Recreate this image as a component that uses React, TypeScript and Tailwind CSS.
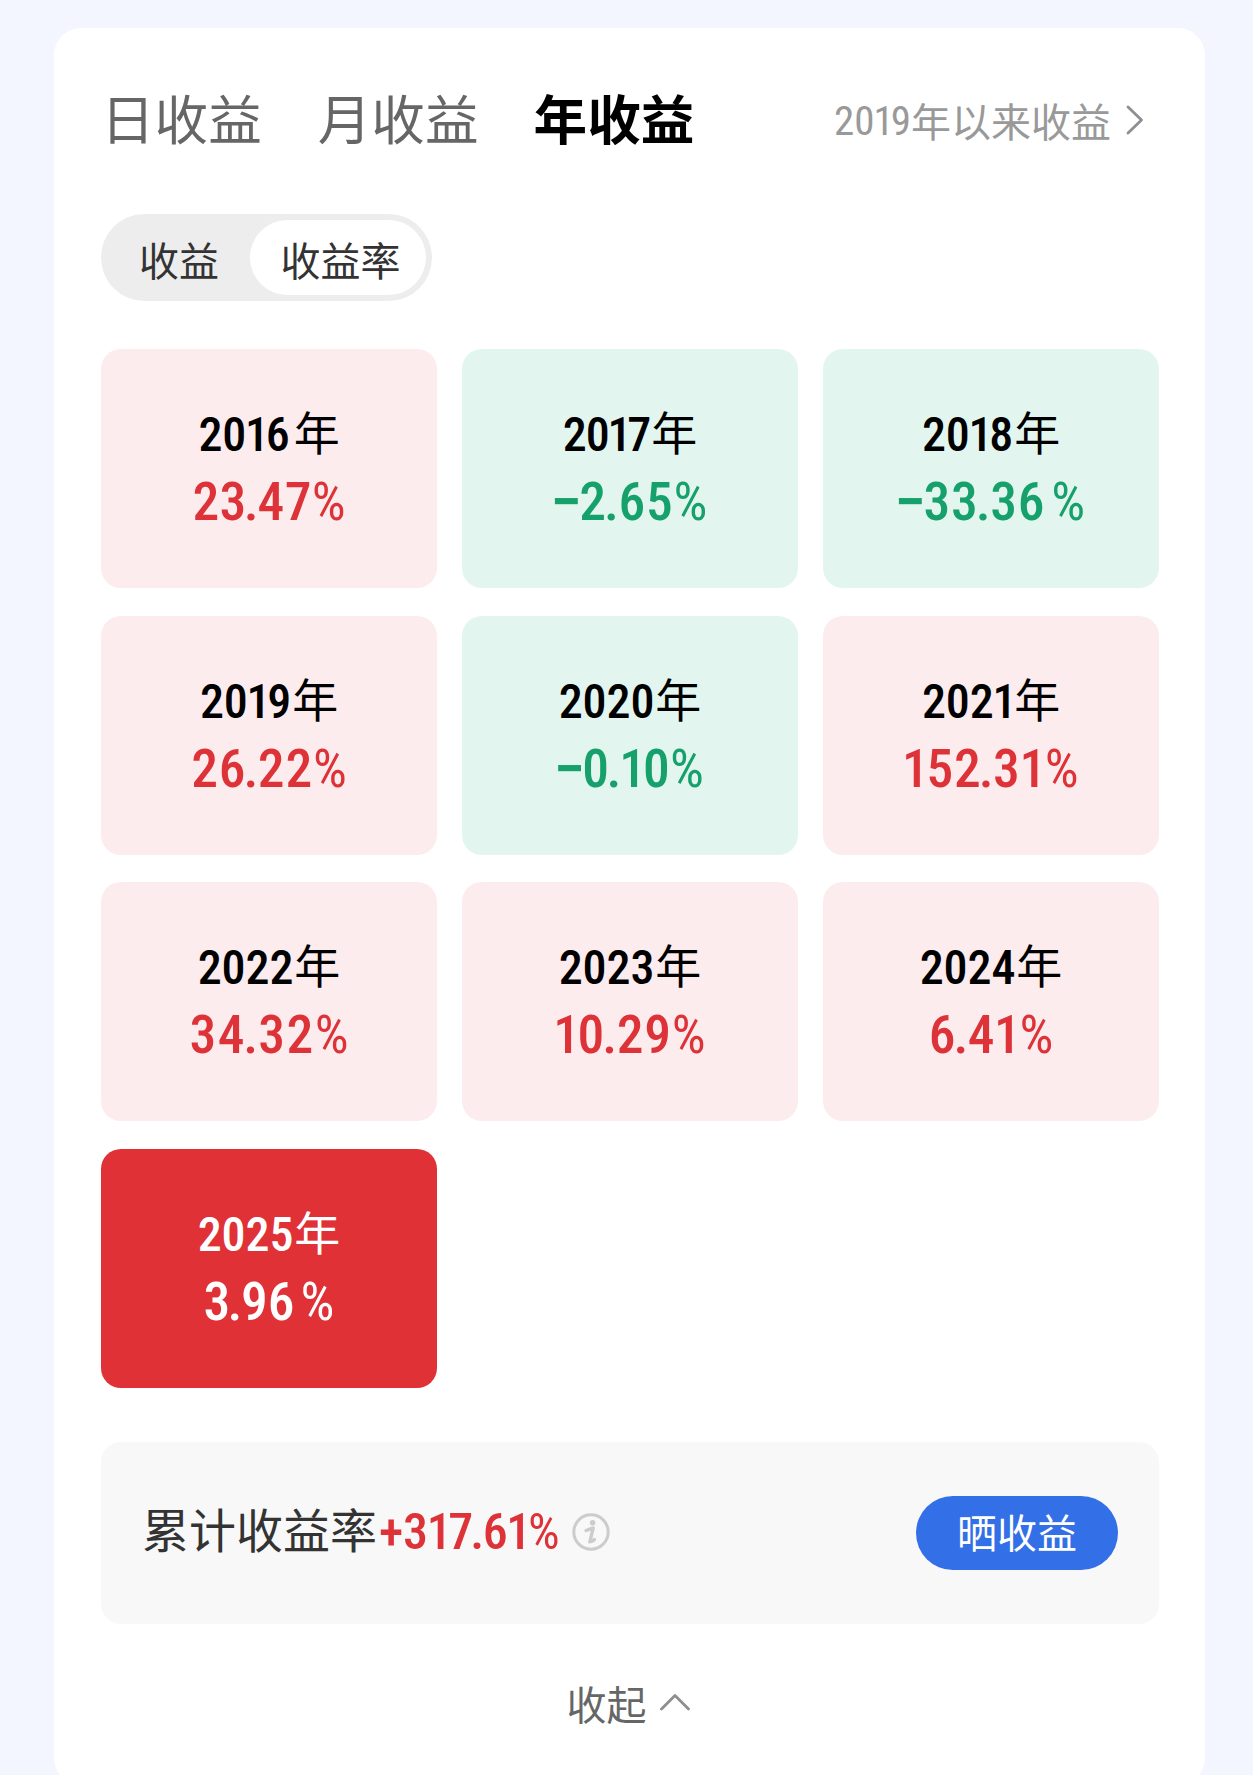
import clsx from "clsx";

const CJK = "font-['Noto_Sans_CJK_SC',sans-serif]";
const NUM = "font-['Roboto_Condensed','Noto_Sans_CJK_SC',sans-serif]";

const years = [
  { year: "2016", rate: "23.47", kern: -0.5 },
  { year: "2017", rate: "−2.65" },
  { year: "2018", rate: "−33.36" },
  { year: "2019", rate: "26.22" },
  { year: "2020", rate: "−0.10", kern: -0.5 },
  { year: "2021", rate: "152.31" },
  { year: "2022", rate: "34.32", kern: 0.7 },
  { year: "2023", rate: "10.29" },
  { year: "2024", rate: "6.41" },
  { year: "2025", rate: "3.96", kern: -0.8, active: true },
];

// proportional figures: "1" and "." sit tighter than the other glyphs
function Digits({ text, className, kern = 0 }: { text: string; className?: string; kern?: number }) {
  return (
    <span className={className} style={kern ? { letterSpacing: `${kern}px` } : undefined}>
      {text.split("").map((c, i) => (
        <span
          key={i}
          className={clsx(
            c === "1" && "-ml-[1.2px] -mr-[3.2px]",
            c === "." && "-ml-[2.8px] -mr-[1.4px]",
            c === "−" && "inline-block scale-x-120 font-bold"
          )}
        >
          {c}
        </span>
      ))}
    </span>
  );
}

function YearCard({ year, rate, kern = 0, active }: { year: string; rate: string; kern?: number; active?: boolean }) {
  const down = rate.startsWith("−");
  return (
    <div
      className={clsx(
        "flex h-[239px] flex-col items-center rounded-[20px] pt-[56px]",
        active ? "bg-[#e03136]" : down ? "bg-[#e2f6ef]" : "bg-[#fdecee]"
      )}
    >
      <div className={clsx("flex h-[60px] items-center", active ? "text-white" : "text-black")}>
        <Digits text={year} kern={year.endsWith("7") ? -1 : -0.1} className={clsx(NUM, "text-[48px] font-medium leading-[60px]")} />
        <span className={clsx(CJK, "mb-[10px] text-[46px] leading-[60px]", year.endsWith("6") ? "ml-[4px]" : "ml-px")}>年</span>
      </div>
      <div
        className={clsx(
          NUM,
          "mt-[3px] flex h-[68px] items-center text-[53.5px] leading-[68px]",
          active ? "text-white" : down ? "text-[#16a06b]" : "text-[#dd3338]"
        )}
      >
        <Digits text={rate} kern={0.8 + kern} className="font-medium" />
        <span className={clsx(rate.endsWith("6") && "ml-[6px]", rate.endsWith("1") && "ml-px")}>%</span>
      </div>
    </div>
  );
}

export default function App() {
  return (
    <div className="h-[1775px] w-[1253px] overflow-hidden bg-[#f3f6ff] pl-[54px] pt-[28px]">
      <div className={clsx(CJK, "h-[1757px] w-[1151px] rounded-[27px] bg-white pl-[47px] pr-[46px] pt-[49px]")}>
        <div className="flex h-[80px] items-center text-[53.6px] leading-[80px] text-[#666]">
          <span>日收益</span>
          <span className="ml-[56px]">月收益</span>
          <span className="ml-[55px] font-bold text-black">年收益</span>
          <div className="ml-auto mr-[15px] mt-[6px] flex items-center text-[40px] text-[#999]">
            <Digits text="2019" kern={0.1} className={clsx(NUM, "mt-[2px] text-[41px]")} />
            <span>年以来收益</span>
            <svg width="18" height="30" viewBox="0 0 18 30" className="ml-[15px]" fill="none" stroke="#8e8e93" strokeWidth="2.8" strokeLinecap="round" strokeLinejoin="round">
              <path d="M2 2 L15.5 15 L2 28" />
            </svg>
          </div>
        </div>

        <div className="mt-[57px] flex h-[87px] w-[331px] items-center rounded-full bg-[#ededed] text-[40px] text-[#333]">
          <span className="w-[149px] pl-[38px] pt-[2px]">收益</span>
          <span className="flex h-[75px] w-[176px] items-center justify-center rounded-full bg-white pl-[5px] pt-[2px]">收益率</span>
        </div>

        <div className="mt-[48px] grid grid-cols-3 gap-x-[25px] gap-y-[27.67px]">
          {years.map((item) => (
            <YearCard key={item.year} {...item} />
          ))}
        </div>

        <div className="mt-[54px] flex h-[182px] items-center rounded-[20px] bg-[#f8f8f8] pl-[41px] pr-[41px]">
          <span className="mb-[9px] text-[47px] text-[#333]">累计收益率</span>
          <span className={clsx(NUM, "ml-[2px] text-[50px] text-[#dd3338]")}>
            <Digits text="+317.61" kern={-0.2} className="font-medium" />%
          </span>
          <svg width="38" height="38" viewBox="0 0 38 38" className="mb-[2px] ml-[12px]">
            <circle cx="19" cy="19" r="17.2" fill="none" stroke="#ccc" strokeWidth="3" />
            <circle cx="20.6" cy="9.8" r="2.8" fill="#ccc" />
            <path d="M14 17.5 C17 16.5 19 15.5 21.2 15 L17.8 28.8 C20 28.6 21 27.8 22.4 26.6" fill="none" stroke="#ccc" strokeWidth="3.4" strokeLinejoin="round" strokeLinecap="round" />
          </svg>
          <button className="ml-auto h-[74px] w-[202px] rounded-full bg-[#336fe6] pb-[4px] text-[40px] leading-[70px] text-white">晒收益</button>
        </div>

        <div className="mt-[49px] flex h-[60px] items-center justify-center text-[40px] text-[#666]">
          <span>收起</span>
          <svg width="30" height="18" viewBox="0 0 30 18" className="mb-[2px] mr-[4px] ml-[13px]" fill="none" stroke="#8e8e8e" strokeWidth="2.8" strokeLinecap="round" strokeLinejoin="round">
            <path d="M1.5 16 L15 2.5 L28.5 16" />
          </svg>
        </div>
      </div>
    </div>
  );
}
